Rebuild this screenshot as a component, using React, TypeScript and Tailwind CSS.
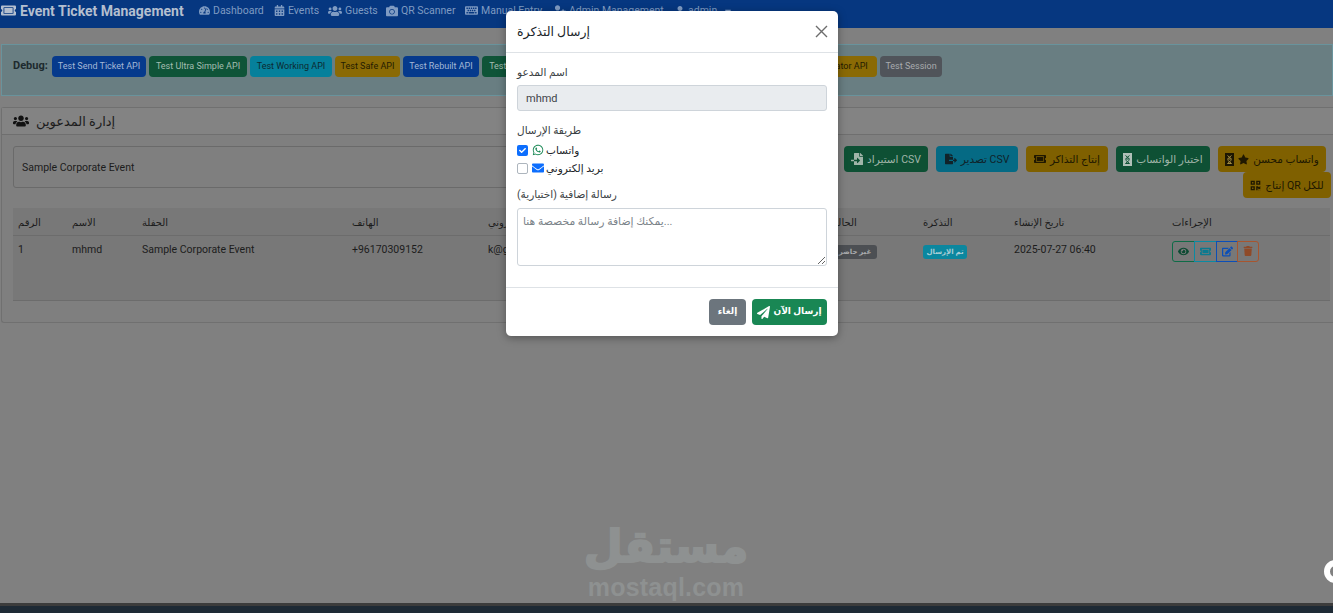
import type { ReactNode } from "react"
import {
  FaCalendarAlt,
  FaCamera,
  FaCaretDown,
  FaCheck,
  FaEdit,
  FaEnvelope,
  FaEye,
  FaFileExport,
  FaFileImport,
  FaKeyboard,
  FaPaperPlane,
  FaQrcode,
  FaStar,
  FaTachometerAlt,
  FaTicketAlt,
  FaTrash,
  FaUser,
  FaUserCog,
  FaUsers,
  FaWhatsapp,
} from "react-icons/fa"

const navLinks = [
  { label: "Dashboard", icon: <FaTachometerAlt size={11} />, width: "w-[75px]" },
  { label: "Events", icon: <FaCalendarAlt size={11} />, width: "w-[54px]" },
  { label: "Guests", icon: <FaUsers size={14} />, width: "w-[58px]" },
  { label: "QR Scanner", icon: <FaCamera size={12} />, width: "w-[79px]" },
  { label: "Manual Entry", icon: <FaKeyboard size={13} />, width: "w-[88px]" },
  { label: "Admin Management", icon: <FaUserCog size={13} />, width: "w-[122px]" },
]

const debugButtons = [
  { label: "Test Send Ticket API", color: "bg-[#063a8c] text-[#a3b8d6]", width: "w-[94px]" },
  { label: "Test Ultra Simple API", color: "bg-[#0f5438] text-[#a3bdb0]", width: "w-[98px]" },
  { label: "Test Working API", color: "bg-[#06809b] text-[#0c2a30]", width: "w-[82px]" },
  { label: "Test Safe API", color: "bg-[#8a6a05] text-[#241c02]", width: "w-[65px]" },
  { label: "Test Rebuilt API", color: "bg-[#063a8c] text-[#a3b8d6]", width: "w-[76px]" },
  { label: "Test Fixed Ticket API", color: "bg-[#0f5438] text-[#a3bdb0]", width: "w-[98px]" },
  { label: "Test Direct API", color: "bg-[#063a8c] text-[#a3b8d6]", width: "w-[97px]" },
  { label: "Test Basic API", color: "bg-[#06809b] text-[#0c2a30]", width: "w-[101px]" },
  { label: "Test Validator API", color: "bg-[#8a6a05] text-[#241c02]", width: "w-[90px]" },
  { label: "Test Session", color: "bg-[#50545a] text-[#a8abae]", width: "w-[62px]" },
]

const columns = [
  { label: "الرقم", width: "w-[54px]" },
  { label: "الاسم", width: "w-[70px]" },
  { label: "الحفلة", width: "w-[210px]" },
  { label: "الهاتف", width: "w-[136px]" },
  { label: "البريد الإلكتروني", width: "w-[345px]" },
  { label: "الحالة", width: "w-[90px]" },
  { label: "التذكرة", width: "w-[91px]" },
  { label: "تاريخ الإنشاء", width: "w-[158px]" },
  { label: "الإجراءات", width: "w-[163px]" },
]

// the icon font misses this glyph in the original, so it shows a tofu box
function Tofu({ light }: { light?: boolean }) {
  const fill = light ? "#b0c0b8" : "#1c1602"
  const mark = light ? "#0e5034" : "#a08a40"
  return (
    <svg width="9" height="13" viewBox="0 0 9 13" className="shrink-0">
      <rect width="9" height="13" fill={fill} />
      <path d="M2.5 2.5 6.5 6 2.5 6 6.5 2.5M2.5 7 6.5 10.5 2.5 10.5 6.5 7" fill="none" stroke={mark} />
    </svg>
  )
}

function ToolButton({ className, icon, children }: { className: string; icon: ReactNode; children: ReactNode }) {
  return (
    <div className={`flex h-[26px] items-center justify-center gap-[4px] whitespace-nowrap rounded-[4px] text-[10.5px] ${className}`}>
      {icon}
      <span className="pt-[1px]">{children}</span>
    </div>
  )
}

function ActionButton({ className, children }: { className: string; children: ReactNode }) {
  return (
    <div className={`flex h-[21px] items-center justify-center border ${className}`}>{children}</div>
  )
}

export default function App() {
  return (
    <div className="relative flex h-[613px] w-[1333px] flex-col overflow-hidden bg-[#808080] font-['Roboto','DejaVu_Sans',sans-serif] text-[10.5px] text-[#1c1c1c]">
      {/* navbar, cut off at the top */}
      <nav className="flex h-[28px] shrink-0 items-start bg-[#063780] pl-[1px] pt-[2px] text-[#7f9bc2]">
        <FaTicketAlt size={15} className="mt-[1px] text-[#b4bfcf]" />
        <span className="ml-[4px] w-[179px] pt-[1px] text-[14px] font-bold leading-[17px] text-[#b4bfcf]">
          Event Ticket Management
        </span>
        {navLinks.map((link) => (
          <div key={link.label} className={`flex h-[17px] shrink-0 items-center gap-[3px] whitespace-nowrap ${link.width}`}>
            {link.icon}
            <span className="pt-[1px]">{link.label}</span>
          </div>
        ))}
        <div className="flex h-[17px] items-center gap-[3px]">
          <FaUser size={10} />
          <span className="pt-[1px]">admin</span>
          <FaCaretDown size={10} className="ml-[3px]" />
        </div>
      </nav>

      <main className="flex-1">
        {/* debug strip */}
        <div className="ml-[1px] mt-[16px] flex h-[52px] items-start border border-[#69939c] bg-[#697e82] pl-[11px] pt-[11px]">
          <b className="mt-[2px] w-[39px] shrink-0 text-[11px] text-[#1d2a2e]">Debug:</b>
          <div className="flex gap-[3px]">
            {debugButtons.map((btn) => (
              <div
                key={btn.label}
                className={`flex h-[21px] shrink-0 items-center justify-center whitespace-nowrap rounded-[4px] pt-[1px] text-[9px] ${btn.color} ${btn.width}`}
              >
                {btn.label}
              </div>
            ))}
          </div>
        </div>

        {/* guests card */}
        <section className="ml-[1px] mt-[11px] h-[216px] rounded-l-[3px] border-y border-l border-[#707070] bg-[#7f7f7f]">
          <div className="flex h-[27px] items-center gap-[7px] border-b border-[#6f6f6f] bg-[#838383] pl-[11px] text-[13px]">
            <FaUsers size={16} className="text-[#111]" />
            <span className="pt-[1px]">إدارة المدعوين</span>
          </div>
          <div className="flex items-start pl-[11px] pt-[11px]">
            <div className="flex h-[42px] w-[600px] items-center rounded-[3px] border border-[#6a6a6a] pl-[8px] pt-[1px]">
              Sample Corporate Event
            </div>
            <div className="flex flex-1 flex-col items-end">
              <div className="mr-[7px] flex gap-[8px]">
                <ToolButton className="w-[84px] bg-[#0e5034] text-[#a0b5a9]" icon={<FaFileImport size={12} />}>
                  استيراد CSV
                </ToolButton>
                <ToolButton className="w-[82px] bg-[#056a84] text-[#10232a]" icon={<FaFileExport size={12} />}>
                  تصدير CSV
                </ToolButton>
                <ToolButton className="w-[82px] bg-[#7f6000] text-[#201800]" icon={<FaTicketAlt size={12} />}>
                  إنتاج التذاكر
                </ToolButton>
                <ToolButton className="w-[94px] bg-[#0e5034] text-[#a0b5a9]" icon={<Tofu light />}>
                  اختبار الواتساب
                </ToolButton>
                <ToolButton
                  className="w-[108px] bg-[#7f6000] text-[#201800]"
                  icon={
                    <>
                      <Tofu />
                      <FaStar size={11} />
                    </>
                  }
                >
                  واتساب محسن
                </ToolButton>
              </div>
              <div className="mr-[2px]">
                <ToolButton className="w-[88px] bg-[#7f6000] text-[#201800]" icon={<FaQrcode size={11} />}>
                  إنتاج QR للكل
                </ToolButton>
              </div>
            </div>
          </div>

          <div className="ml-[11px] mt-[10px] w-[1317px] bg-[#787878]">
            <table className="w-full table-fixed border-collapse">
              <thead>
                <tr className="h-[27px] border-b border-[#6c6c6c]">
                  {columns.map((col) => (
                    <th key={col.label} className={`px-[5px] pt-[2px] text-left text-[10px] font-normal ${col.width}`}>
                      {col.label}
                    </th>
                  ))}
                </tr>
              </thead>
              <tbody>
                <tr className="h-[65px] border-b border-[#6c6c6c] align-top">
                  <td className="px-[5px] pt-[6px]">1</td>
                  <td className="px-[5px] pt-[6px]">mhmd</td>
                  <td className="px-[5px] pt-[6px]">Sample Corporate Event</td>
                  <td className="px-[5px] pt-[6px]">+96170309152</td>
                  <td className="px-[5px] pt-[6px]">k@gmail.com</td>
                  <td className="px-[5px] pt-[7px]">
                    <span className="inline-block h-[14px] w-[44px] rounded-[3px] bg-[#4c4f53] text-center text-[7px] font-bold leading-[14px] text-[#a9abad]">
                      غير حاضر
                    </span>
                  </td>
                  <td className="px-[5px] pt-[7px]">
                    <span className="inline-block h-[14px] w-[44px] rounded-[3px] bg-[#0b879f] text-center text-[7px] font-bold leading-[14px] text-[#a8cdd6]">
                      تم الإرسال
                    </span>
                  </td>
                  <td className="px-[5px] pt-[6px]">2025-07-27 06:40</td>
                  <td className="px-[5px] pt-[5px]">
                    <div className="flex">
                      <ActionButton className="w-[23px] rounded-l-[3px] border-[#0e6b47] text-[#0c4a32]">
                        <FaEye size={11} />
                      </ActionButton>
                      <ActionButton className="-ml-[1px] w-[23px] border-[#0a8ba3] text-[#0a7a90]">
                        <FaTicketAlt size={11} />
                      </ActionButton>
                      <ActionButton className="-ml-[1px] w-[22px] border-[#0b4fb8] text-[#0b4fb8]">
                        <FaEdit size={11} />
                      </ActionButton>
                      <ActionButton className="-ml-[1px] w-[22px] rounded-r-[3px] border-[#a8552e] text-[#8f4a28]">
                        <FaTrash size={10} />
                      </ActionButton>
                    </div>
                  </td>
                </tr>
              </tbody>
            </table>
          </div>
        </section>
      </main>

      {/* dark edge of the next page section */}
      <div className="h-[3px] shrink-0 bg-[#3c3c3c]" />
      <div className="h-[7px] shrink-0 bg-[#1e2a35]" />

      {/* watermark */}
      <div className="absolute left-[585px] top-[520px] flex w-[162px] flex-col items-center text-[#8e9191]">
        <span className="font-['DejaVu_Sans',sans-serif] text-[45px] font-bold leading-[54px] [-webkit-text-stroke:2px_#8e9191]">مستقل</span>
        <span className="font-['Liberation_Sans',sans-serif] text-[25px] font-bold leading-[26px] tracking-[0.2px]">
          mostaql.com
        </span>
      </div>

      {/* chat bubble, cut off by the window edge */}
      <div className="absolute left-[1324px] top-[560px] h-[23px] w-[23px] rounded-full border-[6px] border-white" />

      {/* modal */}
      <div className="absolute left-[506px] top-[11px] flex h-[325px] w-[332px] flex-col rounded-[5px] bg-white text-[10.5px] text-[#212529] shadow-[0_2px_8px_rgba(0,0,0,0.35)]">
        <div className="flex h-[42px] shrink-0 items-center justify-between border-b border-[#dee2e6] pl-[11px] pr-[10px]">
          <span className="pt-[1px] text-[12.5px]">إرسال التذكرة</span>
          <svg width="13" height="13" viewBox="0 0 13 13" className="text-[#6c6c6c]">
            <path d="M1 1 12 12M12 1 1 12" fill="none" stroke="currentColor" strokeWidth="1.4" />
          </svg>
        </div>
        <div className="flex-1 px-[11px] pt-[12px]">
          <div className="text-[10.5px] leading-[16px] text-[#3a3f44]">اسم المدعو</div>
          <div className="mt-[4px] flex h-[26px] items-center rounded-[3px] border border-[#ced4da] bg-[#e9ecef] pl-[8px] pt-[2px] text-[11px] text-[#3f4449]">
            mhmd
          </div>
          <div className="mt-[12px] text-[10.5px] leading-[16px] text-[#3a3f44]">طريقة الإرسال</div>
          <div className="mt-[2px] flex h-[18px] items-center gap-[4px]">
            <span className="flex h-[11px] w-[11px] items-center justify-center rounded-[2px] bg-[#0d6efd] text-white">
              <FaCheck size={7} />
            </span>
            <FaWhatsapp size={12} className="text-[#198754]" />
            <span className="-ml-[2px] pt-[1px] text-[10.5px]">واتساب</span>
          </div>
          <div className="flex h-[18px] items-center gap-[4px]">
            <span className="h-[11px] w-[11px] rounded-[2px] border border-[#adb5bd] bg-white" />
            <FaEnvelope size={12} className="text-[#0d6efd]" />
            <span className="-ml-[2px] pt-[1px] text-[10.5px]">بريد إلكتروني</span>
          </div>
          <div className="mt-[10px] text-[10.5px] leading-[16px] text-[#3a3f44]">رسالة إضافية (اختيارية)</div>
          <textarea
            readOnly
            placeholder="يمكنك إضافة رسالة مخصصة هنا..."
            className="mt-[5px] block h-[58px] w-full rounded-[3px] border border-[#ced4da] px-[5px] py-[5px] text-[10.8px] placeholder:text-[#7b8389]"
          />
        </div>
        <div className="flex h-[49px] shrink-0 items-center justify-end gap-[6px] border-t border-[#dee2e6] pr-[11px]">
          <div className="flex h-[26px] w-[37px] items-center justify-center rounded-[4px] bg-[#6c757d] text-[9px] font-bold text-white">
            إلغاء
          </div>
          <div className="flex h-[26px] w-[75px] items-center justify-center gap-[3px] whitespace-nowrap rounded-[4px] bg-[#198754] text-[9px] font-bold text-white">
            <FaPaperPlane size={13} />
            <span>إرسال الآن</span>
          </div>
        </div>
      </div>
    </div>
  )
}
